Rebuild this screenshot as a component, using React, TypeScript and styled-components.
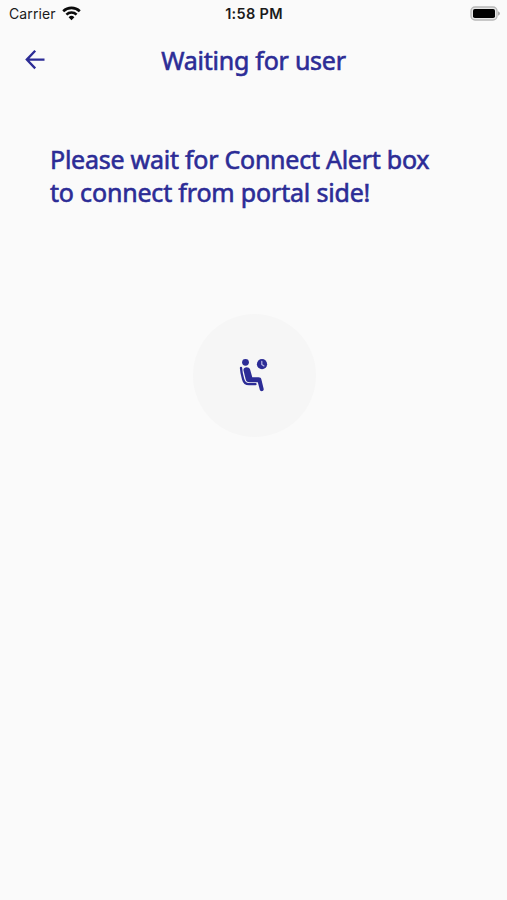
import React from "react";
import styled, { createGlobalStyle } from "styled-components";

const INK = "#2c2c96";

const GlobalStyle = createGlobalStyle`
  * { box-sizing: border-box; }
  body { margin: 0; background: #fafafa; }
`;

const Screen = styled.main`
  display: flex;
  flex-direction: column;
  align-items: center;
  width: 100%;
  min-height: 900px;
  background: #fafafa;
  color: ${INK};
  font-family: "Noto Sans", sans-serif;
`;

const StatusBar = styled.div`
  display: grid;
  grid-template-columns: 1fr auto 1fr;
  align-items: center;
  width: 100%;
  height: 27px;
  padding: 0 7px 0 9px;
  color: #1b1b1b;
  font: 400 14px/27px Inter, sans-serif;
`;

const Carrier = styled.div`
  display: flex;
  align-items: center;
  gap: 6px;
  letter-spacing: 0.1px;
`;

const Clock = styled.div`
  margin-left: -1px;
  font-size: 14.5px;
  font-weight: 600;
  letter-spacing: 0.3px;
`;

const Battery = styled.svg`
  justify-self: end;
`;

const AppBar = styled.header`
  display: grid;
  grid-template-columns: 70px 1fr 70px;
  align-items: center;
  width: 100%;
  height: 65px;
`;

const BackButton = styled.button`
  display: flex;
  justify-content: center;
  padding: 0;
  border: 0;
  background: none;
  color: inherit;
`;

const Title = styled.h1`
  margin: 0;
  font-size: 25px;
  font-weight: 400;
  line-height: 34px;
  letter-spacing: -0.24px;
  text-align: center;
  white-space: nowrap;
  -webkit-text-stroke: 0.6px ${INK};
`;

const Message = styled.p`
  align-self: stretch;
  margin: 51px 50px 0;
  font-size: 25px;
  line-height: 33px;
  letter-spacing: -0.25px;
  white-space: nowrap;
  -webkit-text-stroke: 0.6px ${INK};
`;

const SecondLine = styled.span`
  letter-spacing: -0.18px;
`;

const WaitingBadge = styled.div`
  display: flex;
  align-items: center;
  justify-content: center;
  width: 123px;
  height: 123px;
  margin: 105px 0 0 1px;
  border-radius: 50%;
  background: #f6f6f6;
`;

function WifiIcon() {
  return (
    <svg width="19" height="15" viewBox="0 0 19 15" fill="none" stroke="#0b0b0b" strokeWidth="2.6">
      <path d="M1.2 5.2a12 12 0 0 1 16.6 0" />
      <path d="M4.4 8.6a7.4 7.4 0 0 1 10.2 0" />
      <path d="M9.5 14.2 6.6 11.2a4.1 4.1 0 0 1 5.8 0Z" fill="#0b0b0b" stroke="none" />
    </svg>
  );
}

function BatteryIcon() {
  return (
    <Battery width="30" height="15" viewBox="0 0 30 15">
      <rect x="1" y="1" width="26" height="13" rx="4" fill="#e6e6e6" stroke="#b8b8b8" strokeWidth="1.4" />
      <rect x="3" y="3" width="22" height="9" rx="1.8" fill="#000" />
      <path d="M28 5.2q2 .8 2 2.3t-2 2.3Z" fill="#aaa" />
    </Battery>
  );
}

function BackIcon() {
  return (
    <svg width="20" height="20" viewBox="0 0 20 20" fill="none" stroke="currentColor" strokeWidth="2.3">
      <path d="M19.5 9.6H2M10.2.8 1.8 9.6l8.4 8.8" />
    </svg>
  );
}

function SeatedIcon() {
  return (
    <svg width="48" height="48" viewBox="0 0 48 48" fill="none" stroke={INK} strokeLinecap="round" strokeLinejoin="round">
      <circle cx="15.5" cy="10.3" r="3.4" fill={INK} stroke="none" />
      <path d="M13.4 18c.1-3.4 5.7-3.6 6.7-.4l2.2 7.6h6.2c1.7 0 2.6.8 2.9 2.3l2.3 9.4c.5 2.5-3.3 3.3-3.9.9l-2-7.6h-8.2c-2.4 0-3.5-1-4-3.2Z" fill={INK} stroke="none" />
      <path d="M11 15.9c.2 4 1.2 8 2.1 11.2.9 3.6 2.6 5.1 5.8 5.1h6.6" strokeWidth="2.3" />
      <circle cx="32" cy="12.2" r="5.1" fill={INK} stroke="none" />
      <path d="M31.8 9.3v3.1l2.2 1.5" stroke="#b9b9e5" strokeWidth="1.2" />
    </svg>
  );
}

export default function App() {
  return (
    <Screen>
      <GlobalStyle />
      <StatusBar>
        <Carrier>
          Carrier
          <WifiIcon />
        </Carrier>
        <Clock>1:58 PM</Clock>
        <BatteryIcon />
      </StatusBar>
      <AppBar>
        <BackButton aria-label="Back">
          <BackIcon />
        </BackButton>
        <Title>Waiting for user</Title>
      </AppBar>
      <Message>
        Please wait for Connect Alert box
        <br />
        <SecondLine>to connect from portal side!</SecondLine>
      </Message>
      <WaitingBadge>
        <SeatedIcon />
      </WaitingBadge>
    </Screen>
  );
}
